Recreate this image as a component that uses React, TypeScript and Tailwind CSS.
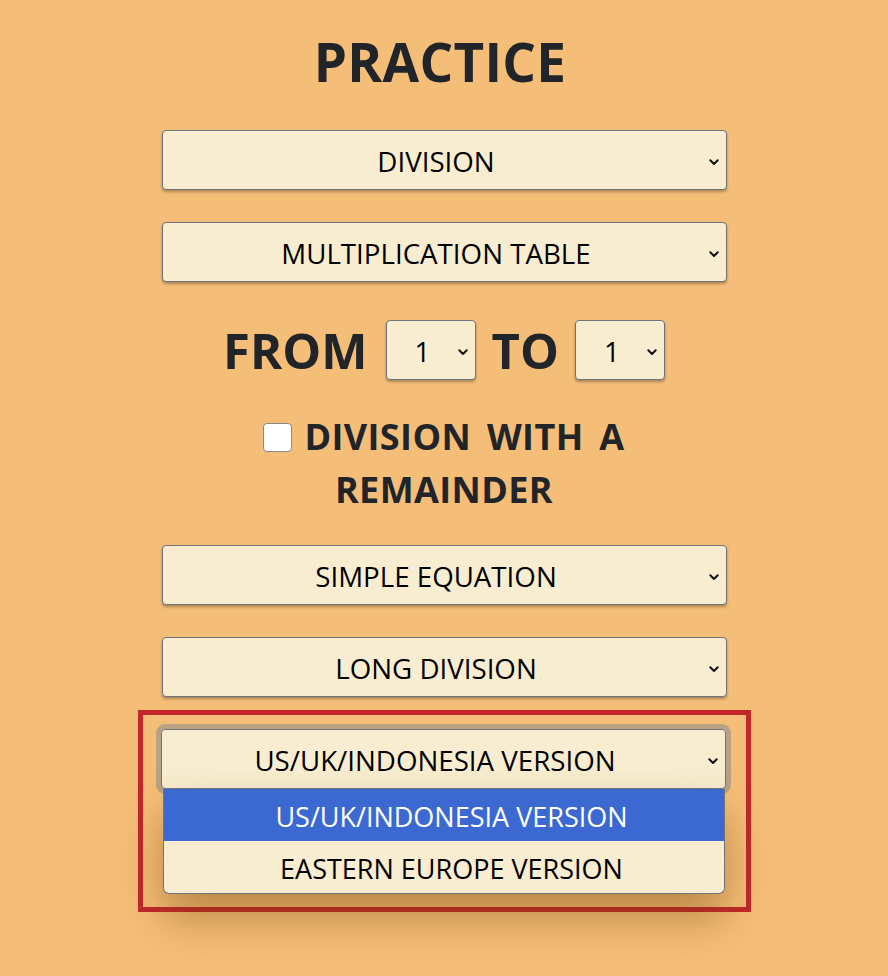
import React from 'react'

const Chevron = () => (
  <svg width="12" height="12" viewBox="0 0 12 12" className="shrink-0">
    <path d="M2.3 4.3 L6 8 L9.7 4.3" fill="none" stroke="#111" strokeWidth="2" strokeLinecap="round" strokeLinejoin="round" />
  </svg>
)

const Select = ({ label, small = false, focused = false }: { label: string; small?: boolean; focused?: boolean }) => (
  <div
    className={
      (small ? 'w-[90px] ' : 'w-[565px] ') +
      'h-[60px] flex items-center rounded-[4px] border border-[#6f737a] bg-[#f8edd0] shadow-[0_2px_3px_rgba(0,0,0,0.3)] ' +
      (focused ? 'outline outline-[5px] outline-[#b9a183]' : '')
    }
  >
    <span className="pl-0.5 pt-1 flex-1 text-center text-[27.7px] text-black">{label}</span>
    <span className="pr-1.5 pt-1">
      <Chevron />
    </span>
  </div>
)

const App = () => {
  return (
    <main className="min-h-[976px] bg-[#f5be78] text-[#212529] flex flex-col items-center" style={{ fontFamily: '"Open Sans", sans-serif' }}>
      <h1 className="mt-[27px] pr-2 text-[53px] font-bold leading-[70px] tracking-[0.3px]">PRACTICE</h1>

      <div className="mt-[33px] flex flex-col items-center gap-8">
        <Select label="DIVISION" />
        <Select label="MULTIPLICATION TABLE" />
      </div>

      <div className="mt-[38px] flex items-center gap-4">
        <span className="mr-0.5 text-[49px] font-bold leading-[60px]">FROM</span>
        <Select label="1" small />
        <span className="text-[49px] font-bold leading-[60px]">TO</span>
        <Select label="1" small />
      </div>

      <div className="mt-[30px] w-[440px] text-center text-[36px] font-bold leading-[53px] [word-spacing:6px] tracking-[0.4px]">
        <span className="inline-block align-[-2px] w-[29px] h-[29px] mr-3 rounded-[4px] border border-[#8a8a8a] bg-white" />
        DIVISION WITH A REMAINDER
      </div>

      <div className="mt-[29px] flex flex-col items-center gap-8">
        <Select label="SIMPLE EQUATION" />
        <Select label="LONG DIVISION" />
      </div>

      <div className="mt-[13px] w-[613px] border-[5px] border-[#c1272b] px-[18px] pt-[14px] pb-[13px]">
        <Select label="US/UK/INDONESIA VERSION" focused />
        <div className="relative z-10 ml-[2px] w-[562px] overflow-hidden rounded-b-[6px] border border-t-0 border-[#6f737a] bg-[#f8edd0] text-[27px] shadow-[0_24px_44px_rgba(110,60,0,0.42)]">
          <div className="h-[52px] pl-4 pt-1 flex items-center justify-center bg-[#3b69d1] text-white">US/UK/INDONESIA VERSION</div>
          <div className="h-[52px] pl-4 pt-1 flex items-center justify-center text-black">EASTERN EUROPE VERSION</div>
        </div>
      </div>
    </main>
  )
}

export default App
